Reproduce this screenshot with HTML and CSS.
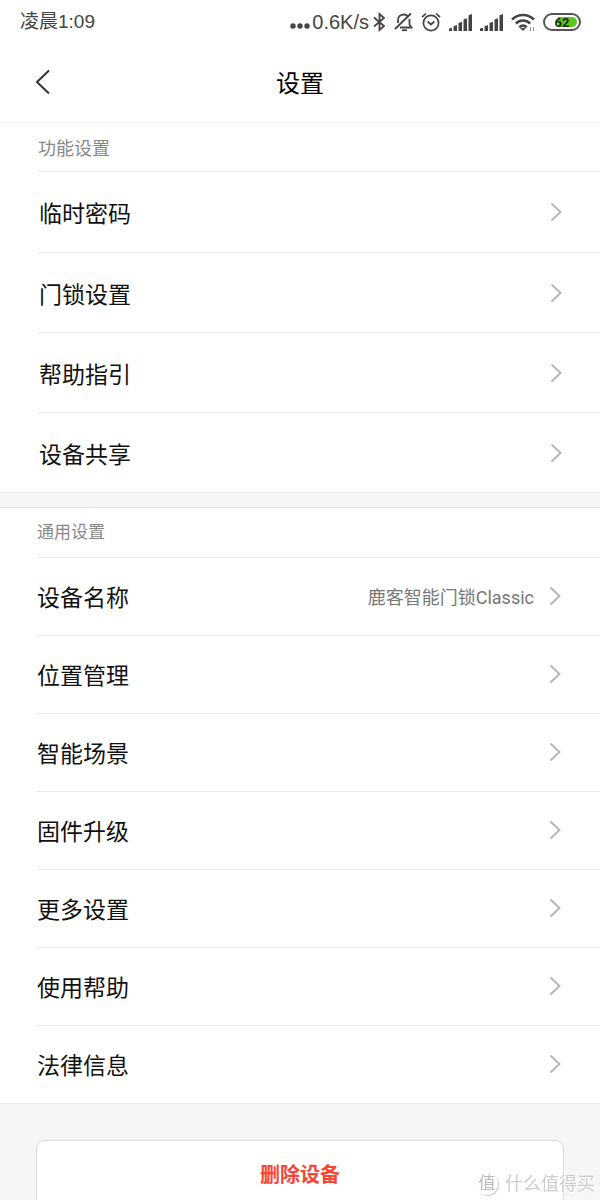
FILE: index.html
```html
<!DOCTYPE html>
<html lang="zh-CN">
<head>
    <meta charset="UTF-8">
    <meta name="viewport" content="width=device-width, initial-scale=1">
    <title>设置</title>
    <link rel="stylesheet" href="styles.css">
</head>
<body>

<!-- 箭头图标, 每一行共用 -->
<svg class="sprite" width="0" height="0">
    <symbol id="arrow" viewBox="0 0 12 20">
        <path d="M1.5 1.5L10.5 10L1.5 18.5" fill="none" stroke="currentColor" stroke-width="1.8"/>
    </symbol>
    <symbol id="signal" viewBox="0 0 23 17">
        <path d="M0 17V14.6L3 13.7V17ZM4.500 17V12.200L8 11V17ZM9.500 17V9L13 7.800V17ZM14.500 17V5.400L18 4.200V17ZM19.500 17V1.200L23 0V17Z" fill="currentColor"/>
    </symbol>
</svg>

<div class="page">
    <!-- 状态栏 -->
    <div class="status">
        <span class="time">凌晨1:09</span>
        <div class="status-right">
            <svg class="dots" width="20" height="6" viewBox="0 0 20 6" fill="currentColor"><circle cx="3" cy="3" r="2.700"/><circle cx="10" cy="3" r="2.700"/><circle cx="17" cy="3" r="2.700"/></svg>
            <span class="speed">0.6K/s</span>
            <svg class="bluetooth" width="13" height="20" viewBox="0 0 13 20" fill="none" stroke="currentColor" stroke-width="1.800"><path d="M1 5.500L11 14L6.500 18V2L11 6L1 14.500"/></svg>
            <svg class="bell" width="19" height="20" viewBox="0 0 19 20" fill="none" stroke="currentColor" stroke-width="1.800"><path d="M4 11V8C4 4.500 6.500 2.500 10 2.500C11.500 2.500 12.500 3 13.500 4M15.500 7V12.500L17.500 15.500H6M1 17L17 1.500"/><path d="M8 18.200H13"/></svg>
            <svg class="alarm" width="20" height="20" viewBox="0 0 20 20" fill="none" stroke="currentColor" stroke-width="1.700"><circle cx="10" cy="11" r="7.600"/><path d="M6.700 9.500L10 12.500L13.300 9.500M1 5.200L5 1.500M15 1.500L19 5.200"/></svg>
            <svg class="signal" width="23" height="17"><use href="#signal"/></svg>
            <svg class="signal" width="23" height="17"><use href="#signal"/></svg>
            <svg class="wifi" width="24" height="19" viewBox="0 0 24 19" fill="none" stroke="currentColor" stroke-width="2.600"><path d="M1 6.500C7.500 .5 16.500 .5 23 6.500M4.800 10.500C9 6.500 15 6.500 19.200 10.500M8.300 14.200C10.500 12.300 13.500 12.300 15.700 14.200"/><path d="M9 15L12 18L15 15Z" fill="currentColor" stroke="none"/><path d="M19.500 14V18M22.500 18V14" stroke-width="1" stroke-opacity=".6"/></svg>
            <span class="battery"><span class="battery-level"></span><span class="battery-num">62</span></span>
        </div>
    </div>

    <!-- 标题栏 -->
    <header class="header">
        <button class="back" type="button" aria-label="返回">
            <svg width="16" height="26" viewBox="0 0 16 26"><path d="M14 1.500L2 13L14 24.500" fill="none" stroke="currentColor" stroke-width="2"/></svg>
        </button>
        <h1>设置</h1>
    </header>

    <!-- 功能设置 -->
    <section class="group feature">
        <h2>功能设置</h2>
        <ul>
            <li><a href="#"><span>临时密码</span><svg class="arrow"><use href="#arrow"/></svg></a></li>
            <li><a href="#"><span>门锁设置</span><svg class="arrow"><use href="#arrow"/></svg></a></li>
            <li><a href="#"><span>帮助指引</span><svg class="arrow"><use href="#arrow"/></svg></a></li>
            <li><a href="#"><span>设备共享</span><svg class="arrow"><use href="#arrow"/></svg></a></li>
        </ul>
    </section>

    <!-- 通用设置 -->
    <section class="group general">
        <h2>通用设置</h2>
        <ul>
            <li><a href="#"><span>设备名称</span><span class="value">鹿客智能门锁Classic</span><svg class="arrow"><use href="#arrow"/></svg></a></li>
            <li><a href="#"><span>位置管理</span><svg class="arrow"><use href="#arrow"/></svg></a></li>
            <li><a href="#"><span>智能场景</span><svg class="arrow"><use href="#arrow"/></svg></a></li>
            <li><a href="#"><span>固件升级</span><svg class="arrow"><use href="#arrow"/></svg></a></li>
            <li><a href="#"><span>更多设置</span><svg class="arrow"><use href="#arrow"/></svg></a></li>
            <li><a href="#"><span>使用帮助</span><svg class="arrow"><use href="#arrow"/></svg></a></li>
            <li><a href="#"><span>法律信息</span><svg class="arrow"><use href="#arrow"/></svg></a></li>
        </ul>
    </section>

    <div class="footer">
        <button class="delete" type="button">删除设备</button>
    </div>
</div>

<!-- 右下角水印 -->
<div class="watermark"><span class="logo">值</span><span>什么值得买</span></div>

</body>
</html>
```
FILE: styles.css
```css
* {
    padding: 0;
    margin: 0;
    box-sizing: border-box;
    list-style: none;
}
body {
    font-family: Roboto, "Noto Sans CJK SC", sans-serif;
    color: #111;
    background-color: #f6f6f6;
}
a {
    color: inherit;
    text-decoration: none;
}
button {
    font-family: inherit;
    cursor: pointer;
}
.sprite {
    position: absolute;
}
.page {
    height: 100vh;
    overflow-y: auto;
    scrollbar-width: none;
}

/* 状态栏 */
.status {
    display: flex;
    justify-content: space-between;
    align-items: center;
    height: 44px;
    padding: 0 19px 0 20px;
    font-family: "Liberation Sans", "Noto Sans CJK SC", sans-serif;
    font-size: 20px;
    line-height: 24px;
    color: #444;
    background-color: #fff;
}
.time {
    font-size: 19px;
}
.status-right {
    display: flex;
    align-items: center;
}
.status-right svg {
    flex: none;
}
.status-right .dots {
    margin-top: 8px;
}
.speed {
    margin: 0 4px 0 2px;
}
.bell {
    margin-left: 8px;
}
.alarm {
    margin: 0 8px;
}
.signal {
    margin-right: 8px;
}
.battery {
    position: relative;
    width: 38px;
    height: 18px;
    padding: 2px;
    border: 2px solid #555;
    border-radius: 9px;
    margin-left: 8px;
}
.battery-level {
    display: block;
    width: 62%;
    height: 100%;
    margin-left: auto;
    border-radius: 0 5px 5px 0;
    background-color: #5bc61b;
}
.battery-num {
    position: absolute;
    left: 0;
    right: 0;
    top: 0;
    font-family: Roboto, sans-serif;
    font-size: 13px;
    line-height: 15px;
    font-weight: bold;
    text-align: center;
    color: #222;
}

/* 标题栏 */
.header {
    position: relative;
    height: 79px;
    border-bottom: 1px solid #f4f4f4;
    background-color: #fff;
}
.header h1 {
    font-size: 24px;
    font-weight: normal;
    line-height: 80px;
    text-align: center;
    color: #000;
}
.back {
    position: absolute;
    left: 35px;
    top: 25px;
    height: 26px;
    border: none;
    background: none;
    color: #333;
}

/* 设置列表 */
.group {
    padding-left: 37px;
    background-color: #fff;
}
.group h2 {
    font-weight: normal;
    color: #888;
}
.group li,
.group h2 {
    border-bottom: 1px solid #e8e8e8;
}
.group li:last-child {
    border-bottom: none;
}
.group a {
    display: flex;
    align-items: center;
    padding: 0 39px 1px 0;
    font-size: 23px;
}
.arrow {
    flex: none;
    width: 12px;
    height: 20px;
    margin-left: auto;
    color: #b4b4b4;
}
.value {
    margin-left: auto;
    font-size: 18px;
    color: #777;
}
.value + .arrow {
    margin-left: 15px;
}
.feature {
    padding-left: 38px;
    border-bottom: 1px solid #e8e8e8;
}
.feature h2 {
    padding-top: 4px;
    font-size: 18px;
    line-height: 44px;
}
.feature a {
    height: 80px;
    padding: 0 38px 0 1px;
}
.feature li + li a {
    height: 79px;
}
.general {
    margin-top: 14px;
    border-top: 1px solid #e0e0e0;
    border-bottom: 1px solid #ececec;
}
.general h2 {
    font-size: 17px;
    line-height: 49px;
}
.general a {
    height: 77px;
}

/* 删除按钮 */
.footer {
    padding: 36px;
}
.delete {
    display: block;
    width: 100%;
    height: 66px;
    border: 1px solid #ddd;
    border-radius: 8px;
    font-size: 20px;
    font-weight: bold;
    color: #f74434;
    background-color: #fff;
}

/* 水印 */
.watermark {
    position: fixed;
    right: 5px;
    bottom: 3px;
    display: flex;
    align-items: center;
    gap: 7px;
    font-size: 18px;
    line-height: 26px;
    color: #ccc;
    text-shadow: 1px 1px 0 #fff;
    pointer-events: none;
}
.logo {
    width: 22px;
    height: 22px;
    border-radius: 50%;
    font-size: 17px;
    line-height: 20px;
    text-align: center;
    color: #bbb;
    background-color: #fff;
    box-shadow: 1px 1px 1px #ccc;
}
```
